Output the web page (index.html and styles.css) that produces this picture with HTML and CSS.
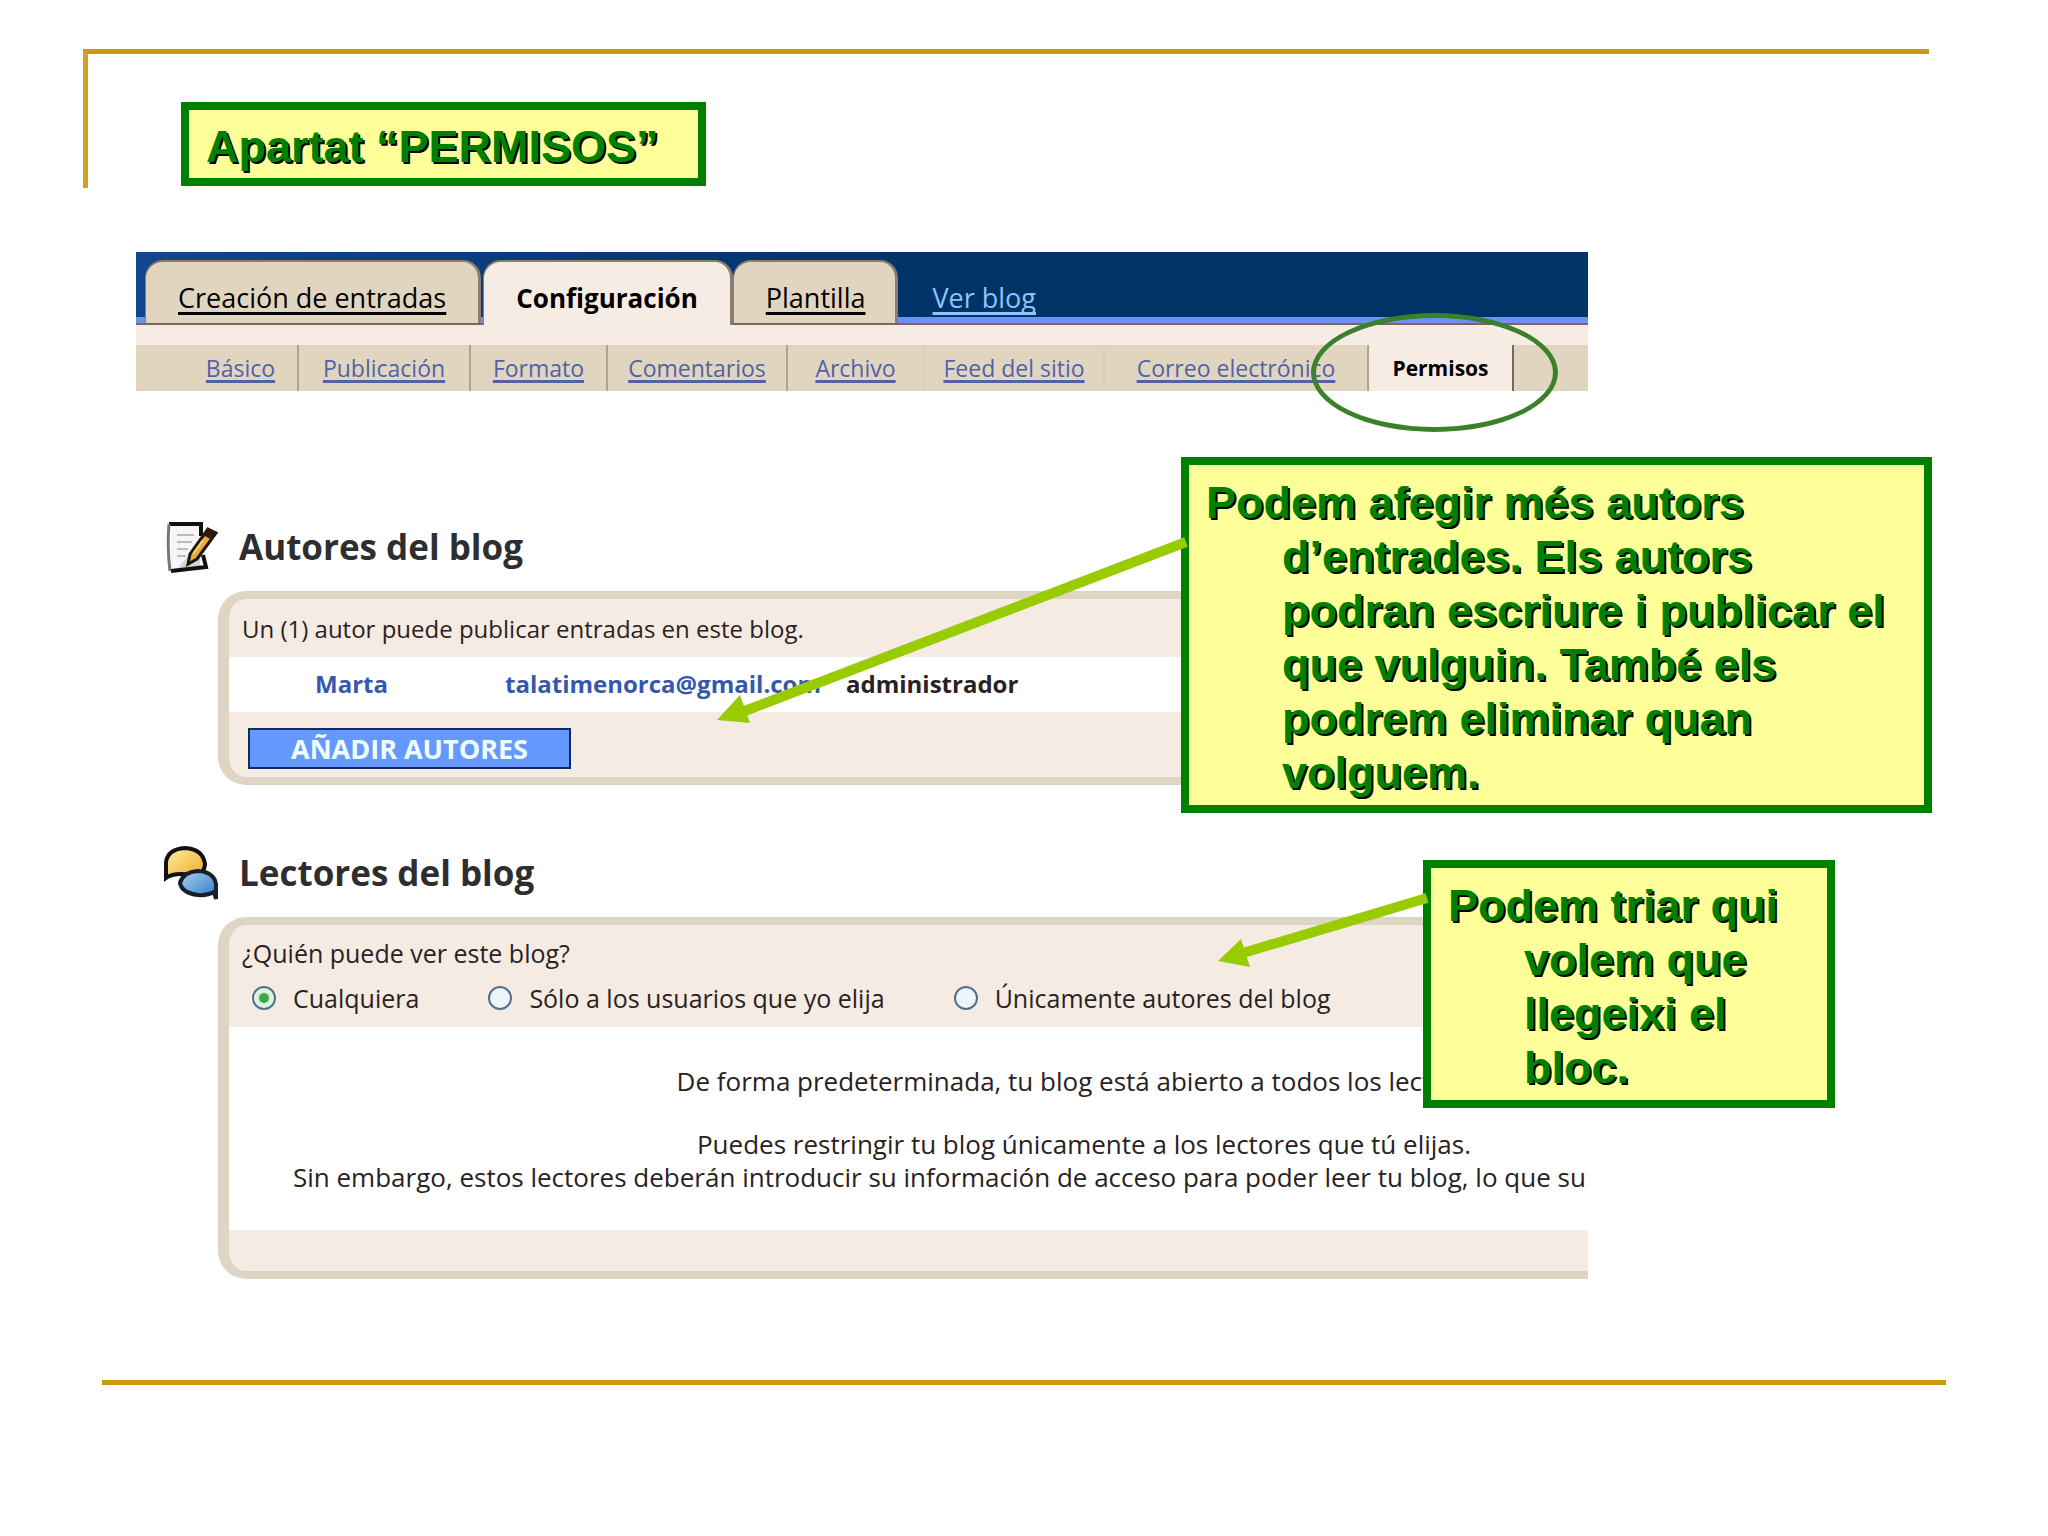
FILE: index.html
```html
<!doctype html>
<html lang="ca">
	<head>
		<meta charset="utf-8">
		<title>Apartat “PERMISOS”</title>
		<meta name="viewport" content="width=device-width, initial-scale=1">
		<link rel="stylesheet" href="styles.css">
	</head>

	<body>
		<main class="slide">
			<header class="slide-header">
				<h1 class="box title">Apartat “PERMISOS”</h1>
			</header>

			<div class="blogger" lang="es">
				<nav class="tabs">
					<a class="tab" href="#entradas">Creación de entradas</a>
					<a class="tab current" href="#configuracion">Configuración</a>
					<a class="tab" href="#plantilla">Plantilla</a>
					<a class="view-blog" href="#blog">Ver blog</a>
				</nav>
				<nav class="subtabs">
					<a href="#basico">Básico</a>
					<a href="#publicacion">Publicación</a>
					<a href="#formato">Formato</a>
					<a href="#comentarios">Comentarios</a>
					<a class="faint" href="#archivo">Archivo</a>
					<a class="faint" href="#feed">Feed del sitio</a>
					<a href="#correo">Correo electrónico</a>
					<a class="current" href="#permisos">Permisos</a>
				</nav>

				<section class="section">
					<h2>
						<svg class="icon" viewBox="0 0 52 52" aria-hidden="true">
							<path d="M5 3h30v45l-30 2z" fill="#f6f6f8"/>
							<path d="M34 20v25l-22 2z" fill="#d4d4da"/>
							<path d="M3 3h32v12M37 34l3 12-35 4" fill="none" stroke="#111" stroke-width="4"/>
							<path d="M3 3q-2 23 1 47" fill="none" stroke="#777" stroke-width="3"/>
							<path d="M11 14h17M11 21h15M11 28h11M11 35h9" stroke="#bbb" stroke-width="2"/>
							<path d="M42 8l8 4-19 26-9 5 2-10z" fill="#e9a93a" stroke="#20160a" stroke-width="3"/>
							<path d="M42 7l9 4-5 8-9-5z" fill="#2a1d10"/>
							<path d="M37 19l-10 14" stroke="#ffd97a" stroke-width="2"/>
						</svg>
						Autores del blog
					</h2>
					<div class="panel">
						<p class="intro">Un (1) autor puede publicar entradas en este blog.</p>
						<table class="authors">
							<tr>
								<td class="name"><a href="#marta">Marta</a></td>
								<td class="mail"><a href="mailto:talatimenorca@gmail.com">talatimenorca@gmail.com</a></td>
								<td>administrador</td>
							</tr>
						</table>
						<div class="actions">
							<button class="add" type="button">AÑADIR AUTORES</button>
						</div>
					</div>
				</section>

				<section class="section">
					<h2>
						<svg class="icon" viewBox="0 0 52 52" aria-hidden="true">
							<defs>
								<linearGradient id="yellow" x1="0" y1="0" x2="1" y2="1">
									<stop offset="0" stop-color="#fff0a0"/>
									<stop offset="1" stop-color="#f0a828"/>
								</linearGradient>
								<linearGradient id="blue" x1="0" y1="0" x2="1" y2="1">
									<stop offset="0" stop-color="#a8d4f4"/>
									<stop offset="1" stop-color="#2f78c0"/>
								</linearGradient>
							</defs>
							<path d="M0 31V15Q2 2 19 1q18 1 20 16-1 12-13 11-18-3-26 3z" fill="url(#yellow)" stroke="#111" stroke-width="4"/>
							<path d="M50 52l-2-7q-7 4-16 3-16-2-18-12 3-11 18-12 16 1 18 13z" fill="url(#blue)" stroke="#16202c" stroke-width="4"/>
						</svg>
						Lectores del blog
					</h2>
					<div class="panel">
						<fieldset class="readers">
							<legend>¿Quién puede ver este blog?</legend>
							<div class="options">
								<label><input type="radio" name="readers" checked> Cualquiera</label>
								<label><input type="radio" name="readers"> Sólo a los usuarios que yo elija</label>
								<label><input type="radio" name="readers"> Únicamente autores del blog</label>
							</div>
						</fieldset>
						<div class="help">
							<p>De forma predeterminada, tu blog está abierto a todos los lectores.</p>
							<p>Puedes restringir tu blog únicamente a los lectores que tú elijas.</p>
							<p class="long">Sin embargo, estos lectores deberán introducir su información de acceso para poder leer tu blog, lo que su</p>
						</div>
						<div class="panel-foot"></div>
					</div>
				</section>
			</div>

			<hr class="rule">

			<aside class="box note note-authors">
				<svg class="arrow" viewBox="0 0 480 200" aria-hidden="true">
					<path d="M476 12L32 182" stroke="#9c0" stroke-width="10"/>
					<path d="M7 190l23-25 10 28z" fill="#9c0"/>
				</svg>
				Podem afegir més autors d’entrades. Els autors podran escriure i publicar el que vulguin. També els podrem eliminar quan volguem.
			</aside>

			<aside class="box note note-readers">
				<svg class="arrow" viewBox="0 0 220 80" aria-hidden="true">
					<path d="M216 8L32 63" stroke="#9c0" stroke-width="10"/>
					<path d="M7 71l23-22 9 28z" fill="#9c0"/>
				</svg>
				Podem triar qui volem que llegeixi el bloc.
			</aside>
		</main>
	</body>
</html>
```

FILE: styles.css
```css
* {
	box-sizing: border-box;
}

body {
	margin: 0;
	background: #fff;
	font-family: "Liberation Sans", Arial, sans-serif;
}

.slide {
	position: relative;
	display: flow-root;
	min-height: 100vh;
}

.slide-header {
	margin: 49px 119px 64px 83px;
	padding: 48px 0 2px 93px;
	border-top: 5px solid #cc9912;
	border-left: 5px solid #d0a024;
}

.box {
	margin: 0;
	border: 8px solid #008000;
	padding: 11px 17px 5px;
	background: #ffff99;
	color: #008000;
	font-size: 45px;
	font-weight: bold;
	line-height: 54px;
	text-shadow: 2px 2px #000;
}

.title {
	width: fit-content;
	padding: 10px 39px 4px 17px;
}

/* Blogger settings page */

.blogger {
	margin: 0 460px 0 136px;
	font-family: "Open Sans", "Trebuchet MS", sans-serif;
	font-size: 24px;
	line-height: 32px;
	color: #2a2222;
}

.tabs {
	display: flex;
	padding: 8px 0 0 9px;
	background:
		linear-gradient(#6c92f4, #6c92f4) bottom / 100% 6px no-repeat,
		linear-gradient(90deg, #11468c, #003366 55%);
	border-bottom: 2px solid #77675c;
}

.tabs a {
	padding: 20px 32px 9px;
	font-size: 27px;
	text-decoration-thickness: 3px;
	text-underline-offset: 4px;
	text-decoration-skip-ink: none;
}

.tabs .tab {
	margin-right: 2px;
	background: #e1d5c0;
	border: 2px solid #8d7d70;
	border-width: 2px 3px 0 1px;
	border-radius: 18px 18px 0 0;
	color: #000;
}

.tabs .current {
	margin-right: 0;
	margin-bottom: -2px;
	background: #f6ece4;
	font-size: 26px;
	font-weight: bold;
	text-decoration: none;
}

.tabs .current + .tab {
	padding-right: 30px;
}

.tabs .view-blog {
	padding-top: 22px;
	color: #8cc4ff;
}

.subtabs {
	display: grid;
	grid-template-columns: 163fr 172fr 137fr 180fr 137fr 180fr 264fr 145fr 74fr;
	border-top: 20px solid #f6ece4;
	background: #e1d5c0;
	text-align: center;
}

.subtabs a {
	padding: 7px 0;
	border-right: 2px solid #b0a394;
	color: #5262a8;
	font-size: 23px;
	text-decoration-thickness: 3px;
	text-underline-offset: 3px;
	text-decoration-skip-ink: none;
}

.subtabs a:first-child {
	padding-left: 48px;
}

.subtabs .faint {
	border-color: #dccfba;
}

.subtabs .current {
	position: relative;
	background: #f6ece4;
	border-color: #77675c;
	color: #000;
	font-size: 21px;
	font-weight: bold;
	text-decoration: none;
}

/* ring round the open tab */
.subtabs .current::after {
	content: "";
	position: absolute;
	inset: -32px -46px -41px -58px;
	border: 5px solid #3b812c;
	border-radius: 50%;
}

.section {
	margin-top: 62px;
}

.subtabs + .section {
	margin-top: 130px;
}

h2 {
	display: flex;
	align-items: center;
	gap: 21px;
	margin: 0 0 18px 30px;
	font-size: 35px;
	line-height: 52px;
	color: #2e2e30;
}

.icon {
	width: 52px;
	height: 52px;
	overflow: visible;
}

.panel {
	margin-left: 82px;
	border: solid #ded5c5;
	border-width: 8px 0 8px 11px;
	border-radius: 28px 0 0 28px;
	background: #f5ebe3;
	overflow: hidden;
}

.panel p {
	margin: 0;
}

.panel .intro {
	padding: 14px 13px 12px;
}

.authors {
	width: 100%;
	border-collapse: collapse;
	background: #fff;
	font-weight: bold;
}

.authors td {
	padding: 11px 0 12px;
}

.authors a {
	color: #3558ae;
	text-decoration: none;
}

.authors .name {
	width: 276px;
	padding-left: 86px;
}

.authors .mail {
	width: 341px;
}

.actions {
	padding: 16px 19px 8px;
}

.add {
	display: block;
	width: 323px;
	height: 41px;
	padding: 0;
	border: 2px solid #0c2c66;
	background: #6699ff;
	color: #f0ffff;
	font: 27px/36px "Open Sans", sans-serif;
	font-weight: bold;
}

.readers {
	margin: 0;
	border: 0;
	padding: 12px 13px 13px;
	font-size: 25px;
}

.readers legend {
	float: left;
	width: 100%;
	margin-bottom: 13px;
	padding: 0;
}

.options {
	clear: both;
	display: flex;
	gap: 69px;
	padding-left: 10px;
}

.options label {
	display: flex;
	align-items: center;
	gap: 17px;
	white-space: nowrap;
}

.options input {
	appearance: none;
	width: 24px;
	height: 24px;
	margin: 0;
	border: 2px solid #51718c;
	border-radius: 50%;
	background: #eef4fb;
}

.options input:checked {
	background: radial-gradient(circle, #3fa648 4px, #dcf5e0 6px);
}

.help {
	padding: 38px 0 36px;
	background: #fff;
	font-size: 26px;
	line-height: 33px;
	white-space: nowrap;
	text-align: center;
}

.help p {
	padding-left: 351px;
}

.help p + p {
	margin-top: 30px;
}

.help p + .long {
	margin-top: 0;
	padding-left: 64px;
	text-align: left;
}

.panel-foot {
	height: 41px;
}

.rule {
	margin: 101px 102px 0;
	border: 0;
	border-top: 5px solid #cc9912;
}

/* callouts lying over the page */

.note {
	position: absolute;
	padding-left: 93px;
	text-indent: -76px;
}

.note-authors {
	top: 457px;
	right: 116px;
	width: 751px;
}

.note-readers {
	top: 860px;
	right: 213px;
	width: 412px;
}

.arrow {
	position: absolute;
}

.note-authors .arrow {
	top: 65px;
	left: -479px;
	width: 480px;
}

.note-readers .arrow {
	top: 22px;
	left: -220px;
	width: 220px;
}
```
